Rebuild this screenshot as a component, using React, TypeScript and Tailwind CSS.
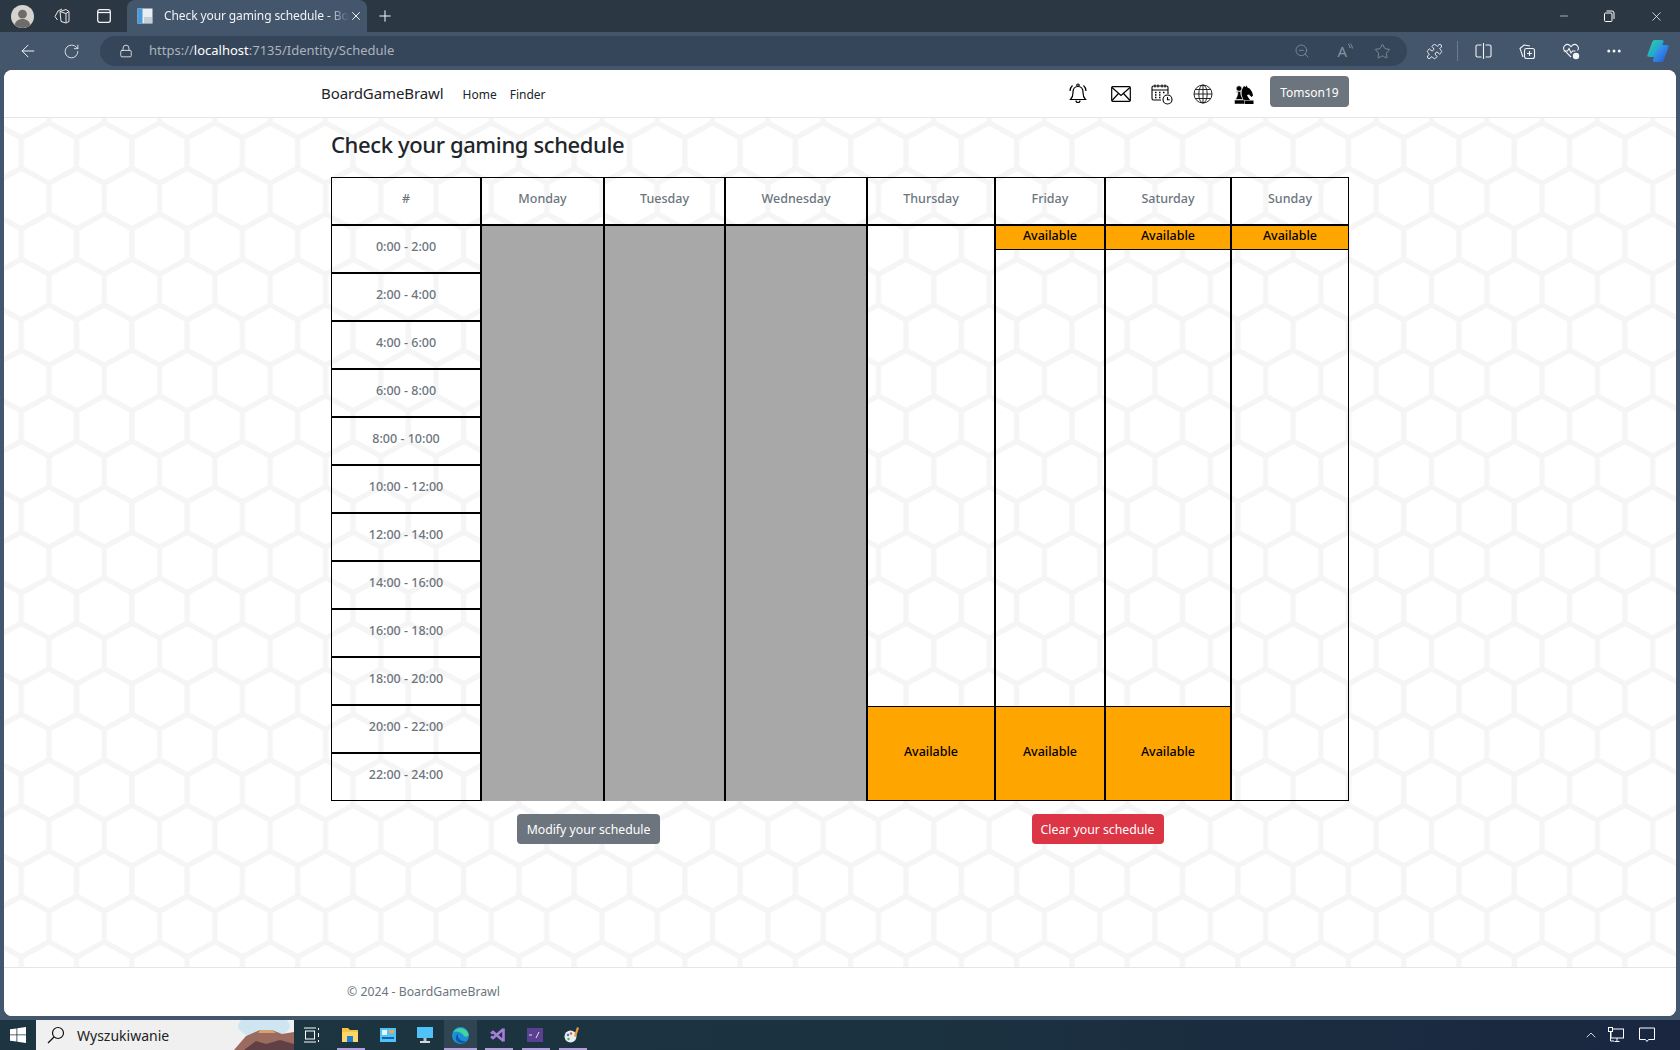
import { ArrowLeft, Ellipsis, Minus, Plus, RotateCw, Star, X, ZoomOut, Lock, ChevronUp, Puzzle } from 'lucide-react';

const slots = [
  '0:00 - 2:00',
  '2:00 - 4:00',
  '4:00 - 6:00',
  '6:00 - 8:00',
  '8:00 - 10:00',
  '10:00 - 12:00',
  '12:00 - 14:00',
  '14:00 - 16:00',
  '16:00 - 18:00',
  '18:00 - 20:00',
  '20:00 - 22:00',
  '22:00 - 24:00'
];

const HexBackground = () => {
  const hex = (cx: number, cy: number) =>
    [
      [0, -30.3],
      [27.65, -15.15],
      [27.65, 15.15],
      [0, 30.3],
      [-27.65, 15.15],
      [-27.65, -15.15]
    ]
      .map(([x, y]) => `${cx + x},${cy + y}`)
      .join(' ');

  return (
    <svg className="absolute inset-0 w-full h-full" aria-hidden="true">
      <defs>
        <pattern id="hex" x="45" y="35" width="55.3" height="91" patternUnits="userSpaceOnUse">
          {[
            [0, 0],
            [55.3, 0],
            [0, 91],
            [55.3, 91],
            [27.65, 45.5]
          ].map(([cx, cy]) => (
            <polygon key={`${cx}-${cy}`} points={hex(cx, cy)} fill="#fff" stroke="#f5f5f5" strokeWidth="5" />
          ))}
        </pattern>
      </defs>
      <rect width="100%" height="100%" fill="url(#hex)" />
    </svg>
  );
};

const TabStrip = () => (
  <div className="h-8 shrink-0 bg-[#2c3744] flex items-center text-white relative">
    {/* Profile */}
    <svg className="ml-[11px] w-[23px] h-[23px]" viewBox="0 0 24 24">
      <circle cx="12" cy="12" r="12" fill="#d6d3cf" />
      <circle cx="12" cy="9.5" r="4.6" fill="#6f6b68" />
      <path d="M3.800 20.500c1.400-4.200 4.600-5.800 8.200-5.800s6.800 1.600 8.200 5.800A12 12 0 0 1 12 24a12 12 0 0 1-8.200-3.500z" fill="#6f6b68" />
    </svg>
    {/* Workspaces */}
    <svg className="ml-[19px] w-[18px] h-[18px]" viewBox="0 0 18 18" fill="none" stroke="#e8e8e8" strokeWidth="1">
      <path d="M7 4.500 13 2.500l3 2v10l-3 1.500-5-1.500z" />
      <path d="M4.500 13 2 9.500 5 4l4-2" />
      <path d="M13 6.500v9M7 4.500l6 2 3-2" />
    </svg>
    {/* Vertical tabs */}
    <svg className="ml-[26px] w-[14px] h-[14px]" viewBox="0 0 14 14" fill="none" stroke="#f2f2f2" strokeWidth="1.300">
      <rect x="0.700" y="0.700" width="12.600" height="12.600" rx="2" />
      <path d="M0.700 3.500h12.600" />
    </svg>
    {/* Active tab */}
    <div className="ml-[16px] w-[240px] h-8 bg-[#44566c] rounded-t-lg flex items-center pl-[10px] pr-[9px]">
      <svg className="w-[16px] h-[16px] shrink-0" viewBox="0 0 16 16">
        <rect x="0.500" y="0.500" width="15" height="15" fill="#e9eef3" />
        <rect x="0.500" y="0.500" width="5" height="15" fill="#4a9ad8" />
        <rect x="7" y="9" width="8" height="6" fill="#c6ced6" />
      </svg>
      <span className="ml-[11px] whitespace-nowrap text-[12px] tracking-[-0.1px] text-[#f1f3f5] [font-family:'Noto_Sans',sans-serif] [mask-image:linear-gradient(to_right,black_88%,transparent)]">
        Check your gaming schedule - Bo
      </span>
      <X className="ml-auto w-[14px] h-[14px] shrink-0" strokeWidth={1.600} />
    </div>
    <Plus className="ml-[9px] w-[18px] h-[18px]" strokeWidth={1.300} />
    {/* Window controls */}
    <div className="ml-auto flex items-center">
      <Minus className="w-[12px] h-[12px] mr-[33px]" strokeWidth={1.200} />
      <svg className="w-[12px] h-[12px] mr-[34px]" viewBox="0 0 12 12" fill="none" stroke="#fff" strokeWidth="1">
        <rect x="1.500" y="3" width="7.500" height="8.500" rx="1" />
        <path d="M3.500 1h5.500a2 2 0 0 1 2 2v6" />
      </svg>
      <X className="w-[15px] h-[15px] mr-[16px]" strokeWidth={1.200} />
    </div>
  </div>
);

const Toolbar = () => (
  <div className="h-[38px] shrink-0 bg-[#44566c] flex items-center text-[#f1f3f5]">
    <ArrowLeft className="ml-[18px] w-[20px] h-[20px]" strokeWidth={1.200} />
    <RotateCw className="ml-[25px] w-[17px] h-[17px]" strokeWidth={1.200} />
    <div className="ml-[20px] w-[1307px] h-[30px] rounded-full bg-[#36465a] flex items-center">
      <Lock className="ml-[19px] w-[14px] h-[14px]" strokeWidth={1.400} />
      <span className="ml-[16px] text-[13px] text-[#aab4bf] [font-family:'Noto_Sans',sans-serif]">
        https://<span className="text-white">localhost</span>:7135/Identity/Schedule
      </span>
      <div className="ml-auto flex items-center text-[#8793a1]">
        <ZoomOut className="w-[16px] h-[16px] mr-[27px]" strokeWidth={1.200} />
        {/* Read aloud */}
        <span className="text-[15px] leading-none [font-family:'Noto_Sans',sans-serif]">A</span>
        <svg className="w-[6px] h-[10px] mr-[21px] mb-[6px]" viewBox="0 0 6 10" fill="none" stroke="#8793a1" strokeWidth="1">
          <path d="M1 1c1.500 1 2 2.500 2 4M3 .500c1.500 1.200 2.300 3 2.300 5" />
        </svg>
        <Star className="w-[17px] h-[17px] mr-[16px]" strokeWidth={1.200} />
      </div>
    </div>
    <Puzzle className="ml-[19px] w-[17px] h-[17px]" strokeWidth={1.300} />
    <div className="ml-[14px] w-px h-[20px] bg-[#6c7c8e]" />
    {/* Split screen */}
    <svg className="ml-[17px] w-[17px] h-[18px]" viewBox="0 0 17 18" fill="none" stroke="#f1f3f5" strokeWidth="1.100">
      <path d="M6.500 3H2.500A1.500 1.500 0 0 0 1 4.500v9A1.500 1.500 0 0 0 2.500 15h4M10.500 3h4A1.500 1.500 0 0 1 16 4.500v9a1.500 1.500 0 0 1-1.500 1.500h-4" />
      <path d="M8.500 1v16" />
    </svg>
    {/* Collections */}
    <svg className="ml-[26px] w-[18px] h-[18px]" viewBox="0 0 18 18" fill="none" stroke="#f1f3f5" strokeWidth="1.100">
      <path d="M5 15 2 6.500 6 3l6 1" />
      <rect x="6.500" y="6.500" width="10" height="10" rx="2" />
      <path d="M11.500 9v5M9 11.500h5" />
    </svg>
    {/* Browser essentials */}
    <svg className="ml-[26px] w-[18px] h-[18px]" viewBox="0 0 18 18" fill="none" stroke="#f1f3f5" strokeWidth="1.100">
      <path d="M9 15 2.500 8.500a3.700 3.700 0 0 1 5.200-5.200L9 4.600l1.300-1.300a3.700 3.700 0 0 1 5.200 5.200" />
      <path d="M1.500 9h4l1.500-2.500L9 11l1.500-2h3" />
      <circle cx="14" cy="14" r="3.200" fill="#f1f3f5" stroke="none" />
    </svg>
    <Ellipsis className="ml-[25px] w-[18px] h-[18px]" strokeWidth={2} />
    {/* Copilot */}
    <svg className="ml-[23px] w-[24px] h-[24px]" viewBox="0 0 24 24">
      <defs>
        <linearGradient id="cp1" x1="0" y1="0" x2="1" y2="1">
          <stop offset="0" stopColor="#2fd0a8" />
          <stop offset="1" stopColor="#1a8fe0" />
        </linearGradient>
        <linearGradient id="cp2" x1="0" y1="0" x2="1" y2="1">
          <stop offset="0" stopColor="#35b6f0" />
          <stop offset="1" stopColor="#2a50d8" />
        </linearGradient>
      </defs>
      <path d="M9 1h7c1.500 0 1.800 1 1.400 2.200L13 16c-.5 1.500-1.500 2-3 2H3c-1.500 0-2-1-1.500-2.300L6 3.500C6.600 1.800 7.500 1 9 1z" fill="url(#cp1)" />
      <path d="M15 6h6c1.500 0 2 1 1.500 2.300L18 20.500c-.6 1.700-1.500 2.500-3 2.500H8.500c-1.500 0-1.800-1-1.400-2.200L11 10c.6-2.500 2-4 4-4z" fill="url(#cp2)" />
    </svg>
  </div>
);

const BellIcon = () => (
  <svg className="w-[20px] h-[22px] mr-[23px]" viewBox="0 0 20 22" fill="none" stroke="#000" strokeWidth="1.200">
    <circle cx="10" cy="2.200" r="1.200" />
    <path d="M10 3.500c-3.500 0-5 2.500-5 6 0 4-1 5.500-2.500 7h15c-1.500-1.500-2.500-3-2.500-7 0-3.500-1.500-6-5-6z" />
    <path d="M8 17.500a2 2 0 0 0 4 0" />
    <path d="M4.500 2.500C2.800 4 2 6 2 8M15.500 2.500C17.200 4 18 6 18 8" />
  </svg>
);

const MailIcon = () => (
  <svg className="w-[20px] h-[16px] mr-[20px]" viewBox="0 0 20 16" fill="none" stroke="#000" strokeWidth="1.200">
    <rect x="0.700" y="0.700" width="18.600" height="14.600" rx="1" />
    <path d="M1 1.500 10 9.500l9-8M1 14.500 7.500 7.500M19 14.500 12.500 7.500" />
  </svg>
);

const CalendarIcon = () => (
  <svg className="w-[22px] h-[22px] mr-[20px]" viewBox="0 0 22 22" fill="none" stroke="#000" strokeWidth="1.100">
    <path d="M10 17H2.500A1.500 1.500 0 0 1 1 15.500v-11A1.500 1.500 0 0 1 2.500 3h13A1.500 1.500 0 0 1 17 4.500V11" />
    <path d="M1 7h16M4 1.500v3M7 1.500v3M11 1.500v3M14 1.500v3" />
    <path d="M4 9.500h1.500M8 9.500h1.500M12 9.500h1.500M4 12h1.500M8 12h1.500M4 14.500h1.500M8 14.500h1.500" strokeWidth="1.500" />
    <circle cx="16.500" cy="16.500" r="4.500" fill="#fff" />
    <path d="M16.500 14v2.700h2.200" />
  </svg>
);

const GlobeIcon = () => (
  <svg className="w-[20px] h-[20px] mr-[21px]" viewBox="0 0 20 20" fill="none" stroke="#111" strokeWidth="0.900">
    <circle cx="10" cy="10" r="9" />
    <ellipse cx="10" cy="10" rx="4.200" ry="9" />
    <path d="M10 1v18M1 10h18M2.200 5.500h15.600M2.200 14.500h15.600" />
  </svg>
);

// Knight behind a pawn, as in the reference
const ChessIcon = () => (
  <svg className="w-[20px] h-[20px] mr-[16px]" viewBox="0 0 20 20" fill="#000">
    <path d="M10 2l1.500 1 1-1.500 1 2c3 1 5 4 5.500 8L17.500 13 15 10.500l-2 .5c.5 2 2 3 3 5H9c-.5-3-2-5.500-1.500-8.500.3-1.500 1-3.500 2.500-5.500z" />
    <path d="M9 16.500h10.500V20H9z" />
    <g stroke="#fff" strokeWidth="0.500">
      <circle cx="5" cy="4.500" r="2.700" />
      <path d="M2.500 7.500h5v1H6.500c.2 3 1.500 5 2.500 7H1.500c1-2 2.300-4 2.500-7H2.500z" />
      <path d="M.5 16h10v4H.5z" />
    </g>
  </svg>
);

const NavBar = () => (
  <nav className="h-[48px] shrink-0 bg-white border-b border-[#e5e5e5] rounded-t-lg flex items-center pl-[317px] pr-[327px] relative z-10 [font-family:'Noto_Sans',sans-serif]">
    <a className="text-[15px] tracking-[-0.1px] text-[#212529]">BoardGameBrawl</a>
    <a className="ml-[19px] mt-[3px] text-[12px] text-[#212529]">Home</a>
    <a className="ml-[13px] mt-[3px] text-[12px] text-[#212529]">Finder</a>
    <div className="ml-auto flex items-center">
      <BellIcon />
      <MailIcon />
      <CalendarIcon />
      <GlobeIcon />
      <ChessIcon />
      <button className="w-[79px] h-[31px] mt-[-5px] pt-[3px] rounded bg-[#6c757d] text-white text-[12px]">Tomson19</button>
    </div>
  </nav>
);

const Available = ({ tall }: { tall?: boolean }) => (
  <div
    className={
      tall
        ? 'h-[94px] bg-[#ffa500] border-t border-black flex items-center justify-center text-[12.500px] font-medium text-black pb-[2px]'
        : 'h-[24px] bg-[#ffa500] border-b border-black flex items-center justify-center text-[12.500px] font-medium text-black pb-[2px]'
    }
  >
    Available
  </div>
);

const HeadCell = ({ label }: { label: string }) => (
  <div className="h-[48px] shrink-0 border-b-2 border-black flex items-center justify-center text-[12.500px] font-medium text-[#6c757d] pb-[4px]">
    {label}
  </div>
);

const Schedule = () => (
  <div className="w-[1018px] h-[624px] grid grid-cols-[150px_123px_121px_142px_128px_110px_126px_1fr] border-t border-l border-black">
    <div className="flex flex-col border-r-2 border-b border-black">
      <HeadCell label="#" />
      {slots.map((slot, i) => (
        <div
          key={slot}
          className={
            i < slots.length - 1
              ? 'h-[48px] border-b-2 border-black flex items-center justify-center text-[12.500px] font-medium text-[#6c757d] pb-[4px]'
              : 'flex-1 flex items-center justify-center text-[12.500px] font-medium text-[#6c757d] pb-[4px]'
          }
        >
          {slot}
        </div>
      ))}
    </div>

    {['Monday', 'Tuesday', 'Wednesday'].map((day) => (
      <div key={day} className="flex flex-col border-r-2 border-black">
        <HeadCell label={day} />
        <div className="flex-1 bg-[#a8a8a8]" />
      </div>
    ))}

    <div className="flex flex-col border-r-2 border-b border-black">
      <HeadCell label="Thursday" />
      <div className="flex-1" />
      <Available tall />
    </div>
    <div className="flex flex-col border-r-2 border-b border-black">
      <HeadCell label="Friday" />
      <Available />
      <div className="flex-1" />
      <Available tall />
    </div>
    <div className="flex flex-col border-r-2 border-b border-black">
      <HeadCell label="Saturday" />
      <Available />
      <div className="flex-1" />
      <Available tall />
    </div>
    <div className="flex flex-col border-r border-b border-black">
      <HeadCell label="Sunday" />
      <Available />
      <div className="flex-1" />
    </div>
  </div>
);

const TaskBar = () => (
  <div className="h-[30px] shrink-0 bg-gradient-to-r from-[#1c3540] via-[#1b3340] to-[#1a2640] flex items-center relative text-white">
    <svg className="ml-[10px] w-[16px] h-[16px]" viewBox="0 0 16 16" fill="#fff">
      <path d="M0 2.300 6.500 1.400v6.100H0zM7.300 1.300 16 0v7.500H7.300zM0 8.300h6.500v6.200L0 13.700zM7.300 8.300H16V16l-8.700-1.300z" />
    </svg>
    <div className="ml-[10px] w-[258px] h-[30px] bg-[#f0f0f0] flex items-center relative overflow-hidden">
      <svg className="ml-[11px] w-[18px] h-[18px]" viewBox="0 0 18 18" fill="none" stroke="#111" strokeWidth="1.200">
        <circle cx="11" cy="7" r="5.500" />
        <path d="M7 11 1 17" />
      </svg>
      <span className="ml-[12px] text-[14px] text-[#222] [font-family:'Noto_Sans',sans-serif]">Wyszukiwanie</span>
      <svg className="absolute right-0 top-0 w-[60px] h-[30px]" viewBox="0 0 60 30">
        <ellipse cx="30" cy="6" rx="26" ry="12" fill="#cfe6f2" />
        <path d="M0 30 12 16l14-6h12l10 4 12-2v18z" fill="#9a6b5e" />
        <path d="M10 30l12-9 10 3 14-4 14 4v6z" fill="#5f4044" />
        <path d="M26 10h12l4 3H24z" fill="#d9a070" />
      </svg>
    </div>
    {/* Task view */}
    <svg className="ml-[10px] w-[16px] h-[16px]" viewBox="0 0 16 16" fill="none" stroke="#fff" strokeWidth="1">
      <path d="M0 1h12M0 15h12M14.500 1v2M14.500 6v4M14.500 13v2" />
      <rect x="1.500" y="4" width="9" height="8" />
    </svg>
    {/* Explorer */}
    <svg className="ml-[22px] w-[16px] h-[16px]" viewBox="0 0 16 16">
      <path d="M0 1h6l2 2h8v12H0z" fill="#f4c542" />
      <rect x="0" y="5" width="16" height="10" fill="#ffd767" />
      <rect x="5" y="9" width="6" height="6" fill="#1f7fd6" />
    </svg>
    <svg className="ml-[22px] w-[16px] h-[16px]" viewBox="0 0 16 16">
      <rect width="16" height="14" y="1" fill="#4fc3f7" />
      <rect x="2" y="3" width="5" height="5" fill="#e8f7ff" />
      <rect x="9" y="3" width="5" height="3" fill="#f4a742" />
      <rect x="2" y="10" width="12" height="2" fill="#1565a8" />
    </svg>
    <svg className="ml-[21px] w-[16px] h-[16px]" viewBox="0 0 16 16">
      <rect width="16" height="11" fill="#4fc3f7" />
      <rect x="6.500" y="11" width="3" height="3" fill="#b0bec5" />
      <rect x="3" y="14" width="10" height="2" fill="#cfd8dc" />
    </svg>
    {/* Edge, active */}
    <div className="ml-[11px] w-[33px] h-[30px] bg-[#2f4551] flex items-center justify-center">
      <svg className="w-[17px] h-[17px]" viewBox="0 0 17 17">
        <circle cx="8.500" cy="8.500" r="8.500" fill="#1b8fd8" />
        <path d="M1 6c2-6 13-7 15.500 1 .4 3-3 3.500-4.500 2C10 5 3 3 1 6z" fill="#43d39e" />
        <path d="M6 15c-3-2-3-6 0-8-1 4 3 8 8 7-2 2.500-5 2.500-8 1z" fill="#0c59a4" />
      </svg>
    </div>
    {/* Visual Studio */}
    <svg className="ml-[13px] w-[16px] h-[16px]" viewBox="0 0 16 16" fill="none" stroke="#a77bd8" strokeWidth="2.600">
      <path d="M13.500 2 3 11 1 9.500M13.500 14 3 5 1 6.500M13.500 1.500v13" />
    </svg>
    <svg className="ml-[21px] w-[16px] h-[14px]" viewBox="0 0 16 14">
      <rect width="16" height="14" fill="#5b3f91" />
      <path d="M2 7h3M9 10l3-6" stroke="#e5e5e5" strokeWidth="1" />
    </svg>
    <svg className="ml-[21px] w-[16px] h-[16px]" viewBox="0 0 16 16">
      <circle cx="6.500" cy="9.500" r="6" fill="#e8eef0" />
      <circle cx="4" cy="8" r="1.300" fill="#3b82c4" />
      <circle cx="7" cy="6.500" r="1.200" fill="#e0574f" />
      <circle cx="4.500" cy="12" r="1.200" fill="#4caf50" />
      <path d="M13 0l2 1-3 9-2-1z" fill="#e89a3c" />
    </svg>
    {/* Running app markers */}
    <div className="absolute left-[337px] bottom-0 w-[28px] h-[2px] bg-[#b39ddb]" />
    <div className="absolute left-[444px] bottom-0 w-[33px] h-[2px] bg-[#b39ddb]" />
    <div className="absolute left-[485px] bottom-0 w-[28px] h-[2px] bg-[#b39ddb]" />
    <div className="absolute left-[522px] bottom-0 w-[28px] h-[2px] bg-[#b39ddb]" />
    <div className="absolute left-[559px] bottom-0 w-[28px] h-[2px] bg-[#b39ddb]" />
    {/* Tray */}
    <div className="ml-auto flex items-center">
      <ChevronUp className="w-[16px] h-[16px] mr-[9px]" strokeWidth={1.200} />
      <svg className="w-[16px] h-[16px] mr-[15px]" viewBox="0 0 16 16" fill="none" stroke="#fff" strokeWidth="1">
        <rect x="3" y="2" width="12.500" height="9" />
        <rect x="0.500" y="0.500" width="4" height="4" fill="#1a2640" />
        <path d="M2.500 4.500V14M2.500 14H6M9 11v3M6.500 14.500h5" />
      </svg>
      <svg className="w-[16px] h-[16px] mr-[25px]" viewBox="0 0 16 16" fill="none" stroke="#fff" strokeWidth="1">
        <path d="M.5 1h15v11.500H9.500L8 14.500l-1.500-2H.5z" />
      </svg>
    </div>
  </div>
);

export default function App() {
  return (
    <div className="w-[1680px] h-[1050px] flex flex-col bg-[#44566c] overflow-hidden">
      <TabStrip />
      <Toolbar />
      <div className="flex-1 mx-1 mb-1 bg-white rounded-t-lg rounded-b-lg flex flex-col overflow-hidden">
        <NavBar />
        <main className="flex-1 relative">
          <HexBackground />
          <div className="relative pl-[327px] pt-[8px] [font-family:'Noto_Sans',sans-serif]">
            <h1 className="text-[22px] leading-[36px] font-medium text-[#212529] mb-[15px] tracking-[-0.38px]">Check your gaming schedule</h1>
            <Schedule />
            <div className="w-[1021px] grid grid-cols-2 mt-[13px] pl-[3px]">
              <div className="flex justify-center">
                <button className="w-[143px] h-[30px] pt-[2px] rounded bg-[#6c757d] text-white text-[12.250px]">Modify your schedule</button>
              </div>
              <div className="flex justify-center">
                <button className="w-[132px] h-[30px] pt-[2px] rounded bg-[#dc3545] text-white text-[12.250px]">Clear your schedule</button>
              </div>
            </div>
          </div>
        </main>
        <footer className="h-[49px] shrink-0 bg-white border-t border-[#e5e5e5] flex items-center pl-[343px] relative z-10">
          <span className="text-[12.250px] text-[#6c757d] [font-family:'Noto_Sans',sans-serif]">© 2024 - BoardGameBrawl</span>
        </footer>
      </div>
      <TaskBar />
    </div>
  );
}
